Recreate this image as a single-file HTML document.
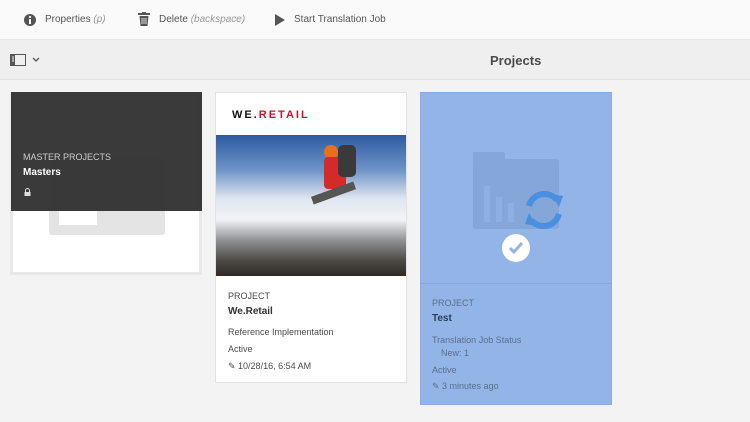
<!DOCTYPE html>
<html><head><style>
*{margin:0;padding:0;box-sizing:border-box}
body{width:750px;height:422px;overflow:hidden;background:#f3f3f3;font-family:"Liberation Sans",sans-serif;position:relative;color:#4b4b4b}
.tb{position:absolute;left:0;top:0;width:750px;height:40px;background:#fafafa;border-bottom:1px solid #e6e6e6}
.tb span{position:absolute;top:14px;font-size:10px;color:#555}
.tb i{color:#999}
.bar{position:absolute;left:0;top:40px;width:750px;height:40px;background:#efefef;border-bottom:1px solid #e4e4e4}
.card{position:absolute;background:#fff;border:1px solid #e2e2e2}
.t{position:absolute;font-size:9px}
</style></head><body>
<div class="tb">
<svg style="position:absolute;left:23px;top:13px" width="14" height="14"><circle cx="7" cy="7" r="6" fill="#555"/><rect x="6" y="6" width="2" height="5" fill="#fff"/><circle cx="7" cy="4" r="1.1" fill="#fff"/></svg>
<span style="left:45px">Properties <i>(p)</i></span>
<svg style="position:absolute;left:137px;top:12px" width="14" height="15"><rect x="1" y="1" width="12" height="2" fill="#555"/><rect x="5" y="0" width="4" height="2" fill="#555"/><path d="M2.5 4h9l-1 10h-7z" fill="#555"/><path d="M5 6v6M7 6v6M9 6v6" stroke="#fafafa" stroke-width="0.8"/></svg>
<span style="left:159px">Delete <i>(backspace)</i></span>
<svg style="position:absolute;left:274px;top:14px" width="12" height="12"><path d="M1 0L11 6L1 12z" fill="#555"/></svg>
<span style="left:294px">Start Translation Job</span>
</div>
<div class="bar">
<svg style="position:absolute;left:10px;top:14px" width="16" height="12"><rect x="0.5" y="0.5" width="15" height="11" fill="none" stroke="#555"/><rect x="1" y="1" width="4" height="10" fill="#555"/><path d="M2 3h2M2 5h2M2 7h2" stroke="#efefef"/></svg>
<svg style="position:absolute;left:32px;top:17px" width="8" height="6"><path d="M1 1l3 3 3-3" stroke="#555" stroke-width="1.3" fill="none"/></svg>
<span style="position:absolute;left:490px;top:13px;font-size:13px;font-weight:bold;color:#4b4b4b">Projects</span>
</div>
<div class="card" style="left:10px;top:92px;width:192px;height:183px;border:3px solid #e8e8e8">
<div style="position:absolute;left:36px;top:63px;width:116px;height:77px;background:#e4e4e4;border-radius:3px"></div>
<div style="position:absolute;left:46px;top:115px;width:38px;height:15px;background:#fff"></div>
</div>
<div style="position:absolute;left:11px;top:92px;width:191px;height:119px;background:#323232;opacity:.96"></div>
<div class="t" style="left:23px;top:152px;color:#ccc">MASTER PROJECTS</div>
<div class="t" style="left:23px;top:167px;color:#fff;font-weight:bold;font-size:10px">Masters</div>
<svg style="position:absolute;left:24px;top:188px" width="7" height="8"><path d="M1.5 4V2.5a2 2 0 0 1 4 0V4" stroke="#ddd" fill="none"/><rect x="0.5" y="4" width="6" height="4" fill="#ddd"/></svg>

<div class="card" style="left:215px;top:92px;width:192px;height:291px">
<div style="position:absolute;left:16px;top:16px;font-size:11px;font-weight:bold;letter-spacing:2px;color:#111">WE.<span style="color:#d0112b">RETAIL</span></div>
<div style="position:absolute;left:0;top:42px;width:190px;height:141px;background:linear-gradient(180deg,#2d5aa0 0%,#6f94c8 25%,#dfe6ef 45%,#f2f4f7 60%,#8d8f93 75%,#4a4641 90%,#2e2a26 100%)">
<div style="position:absolute;left:108px;top:10px;width:14px;height:14px;border-radius:50%;background:#e8701a"></div>
<div style="position:absolute;left:108px;top:22px;width:22px;height:32px;background:#d42a2a;border-radius:4px"></div>
<div style="position:absolute;left:122px;top:10px;width:18px;height:32px;background:#3a3a3a;border-radius:5px"></div>
<div style="position:absolute;left:95px;top:54px;width:45px;height:8px;background:#555;transform:rotate(-20deg)"></div>
</div>
<div class="t" style="left:12px;top:198px">PROJECT</div>
<div class="t" style="left:12px;top:213px;font-weight:bold;font-size:10px;color:#333">We.Retail</div>
<div class="t" style="left:12px;top:234px">Reference Implementation</div>
<div class="t" style="left:12px;top:251px">Active</div>
<div class="t" style="left:12px;top:268px">✎ 10/28/16, 6:54 AM</div>
</div>

<div style="position:absolute;left:420px;top:92px;width:192px;height:313px;background:#93b4e6;border:1px solid #8aabdf">
<div style="position:absolute;left:0;top:190px;width:190px;border-top:1px solid #8aa8d8"></div>
<div style="position:absolute;left:52px;top:59px;width:32px;height:10px;background:#84a6d9;border-radius:2px"></div>
<div style="position:absolute;left:52px;top:66px;width:86px;height:70px;background:#84a6d9;border-radius:3px"></div>
<div style="position:absolute;left:63px;top:93px;width:6px;height:36px;background:#8eafe1"></div>
<div style="position:absolute;left:75px;top:104px;width:6px;height:25px;background:#8eafe1"></div>
<div style="position:absolute;left:87px;top:110px;width:6px;height:19px;background:#8eafe1"></div>
<svg style="position:absolute;left:100px;top:97px" width="46" height="40"><path d="M8 16a16 16 0 0 1 28-6" stroke="#4b8fe0" stroke-width="6" fill="none"/><path d="M30 4l12 2-4 11z" fill="#4b8fe0"/><path d="M38 24a16 16 0 0 1-28 6" stroke="#4b8fe0" stroke-width="6" fill="none"/><path d="M16 36l-12-2 4-11z" fill="#4b8fe0"/></svg>
<div style="position:absolute;left:81px;top:141px;width:28px;height:28px;border-radius:50%;background:#fff"></div>
<svg style="position:absolute;left:87px;top:148px" width="16" height="14"><path d="M2 7l4 4 8-9" stroke="#93b4e6" stroke-width="3" fill="none"/></svg>
<div class="t" style="left:11px;top:205px;color:#5a6f90">PROJECT</div>
<div class="t" style="left:11px;top:220px;font-weight:bold;font-size:10px;color:#2c3e5c">Test</div>
<div class="t" style="left:11px;top:242px;color:#5a6f90">Translation Job Status</div>
<div class="t" style="left:20px;top:255px;color:#5a6f90">New: 1</div>
<div class="t" style="left:11px;top:272px;color:#5a6f90">Active</div>
<div class="t" style="left:11px;top:288px;color:#5a6f90">✎ 3 minutes ago</div>
</div>
</body></html>
